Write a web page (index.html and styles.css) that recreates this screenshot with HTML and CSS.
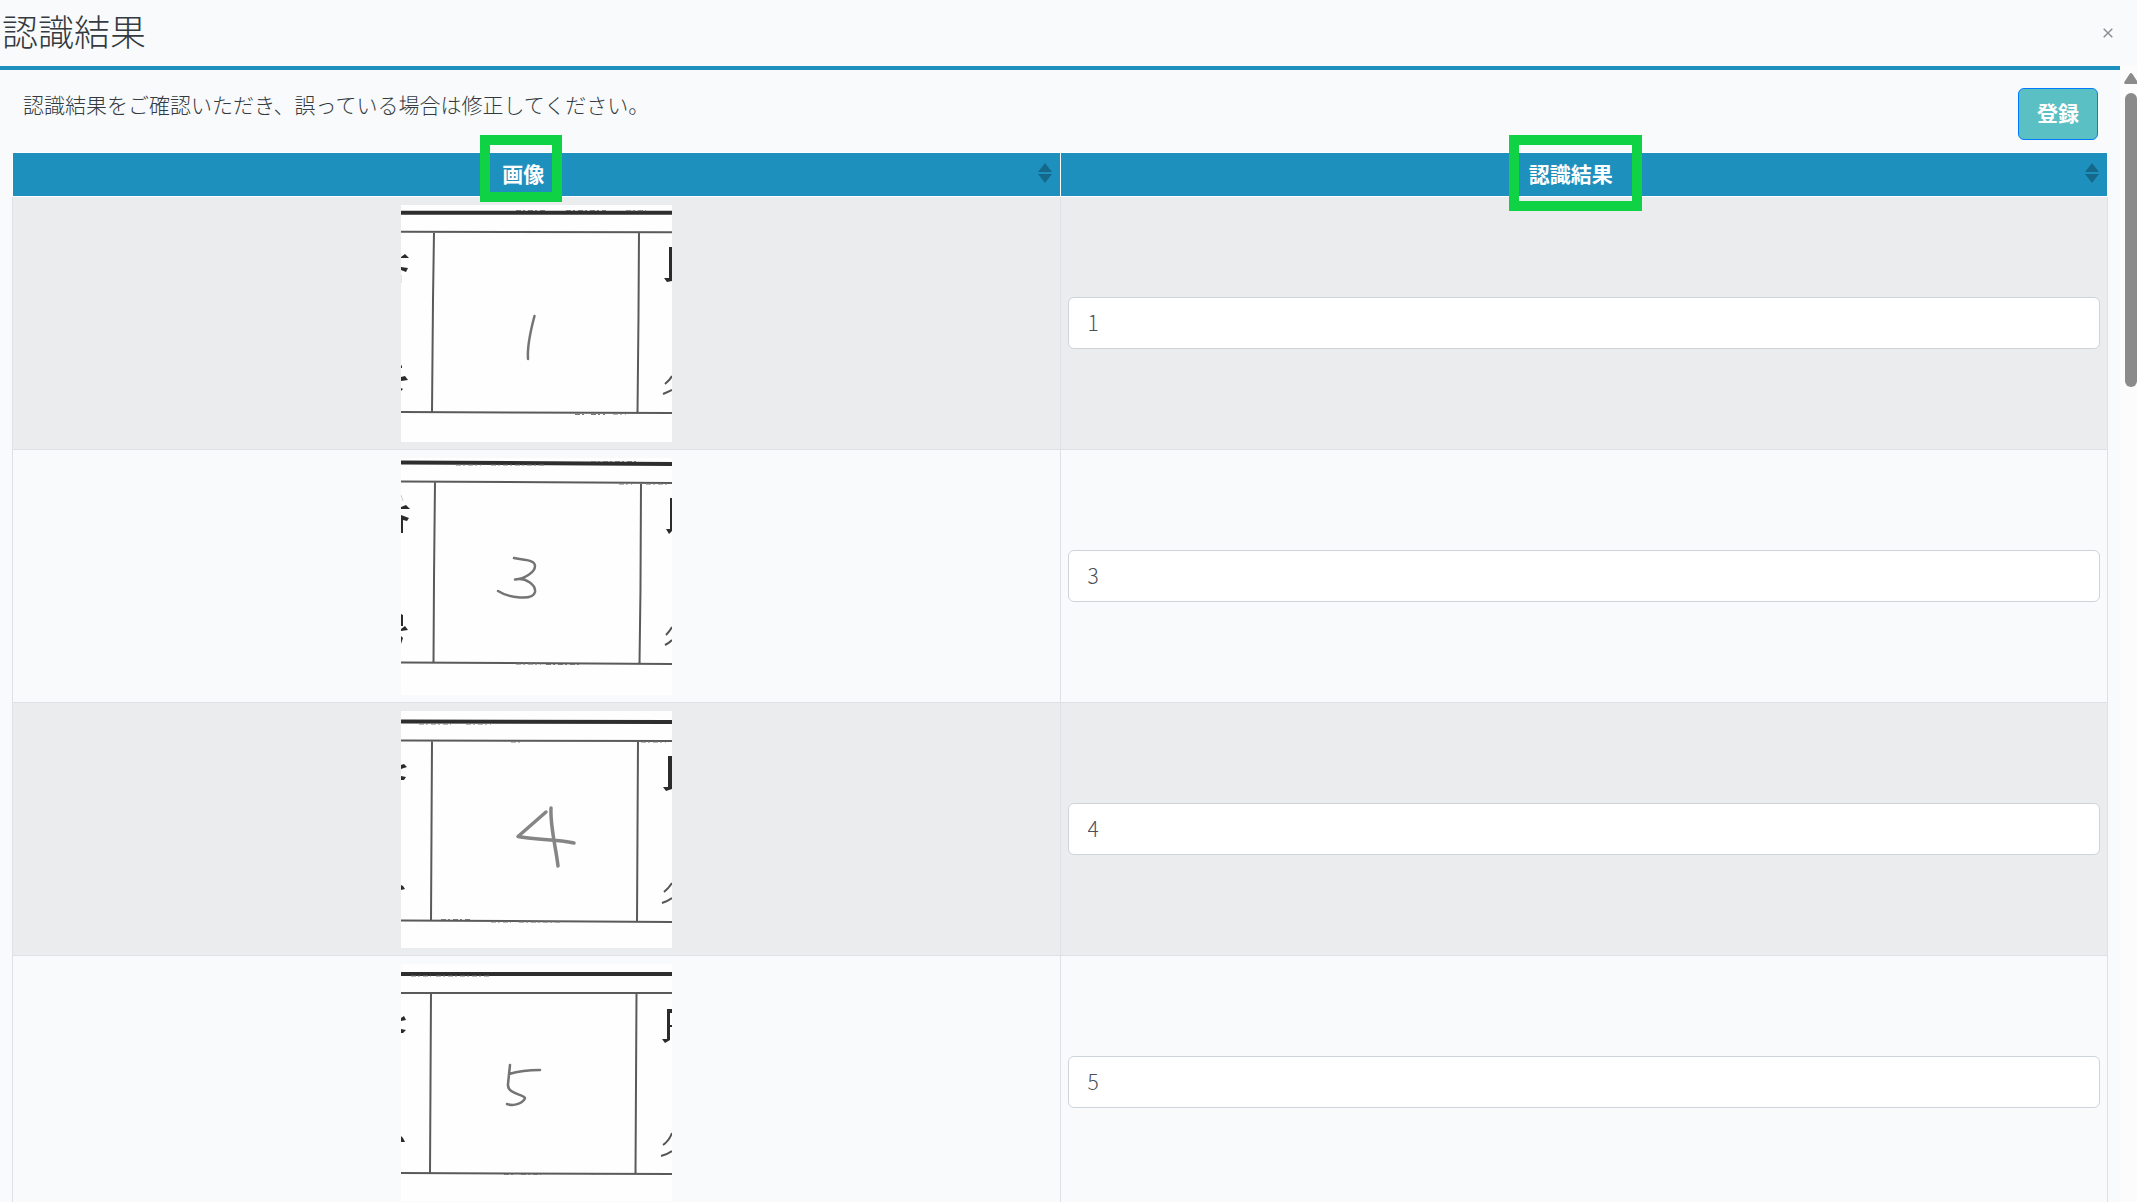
FILE: index.html
```html
<!DOCTYPE html>
<html lang="ja">
<head>
    <meta charset="UTF-8">
    <meta name="viewport" content="width=device-width, initial-scale=1.0">
    <title>認識結果</title>
    <link rel="stylesheet" href="styles.css">
</head>
<body>
    <header class="modal-header">
        <h1>認識結果</h1>
        <button type="button" class="close" aria-label="閉じる">
            <svg width="10" height="10" viewBox="0 0 10 10"><path d="M.7 .7L9.3 9.3M9.3 .7L.7 9.3"/></svg>
        </button>
    </header>

    <div class="modal-body">
        <main class="content">
            <div class="toolbar">
                <p>認識結果をご確認いただき、誤っている場合は修正してください。</p>
                <button type="button" class="btn-register">登録</button>
            </div>

            <table class="result-table">
                <thead>
                    <tr>
                        <th>
                            <div class="th-inner">
                                <span class="label">画像<span class="mark mark-image"></span></span>
                                <svg class="sort" width="14" height="20" viewBox="0 0 14 20"><path d="M7 0L14 9H0zM7 20L0 11H14z"/></svg>
                            </div>
                        </th>
                        <th>
                            <div class="th-inner">
                                <span class="label">認識結果<span class="mark mark-result"></span></span>
                                <svg class="sort" width="14" height="20" viewBox="0 0 14 20"><path d="M7 0L14 9H0zM7 20L0 11H14z"/></svg>
                            </div>
                        </th>
                    </tr>
                </thead>
                <tbody>
                    <tr>
                        <td>
                            <svg class="scan" width="271" height="237" viewBox="0 0 271 237">
                                <path class="thick" d="M0 7.7H271"/>
                                <path class="rough" d="M115 5.5H145M165 5.5H205M225 5.7H245"/>
                                <path class="rule" d="M0 26.7L271 27.3M0 207L271 208M33 27L32 95L31 207M238 27L237.500 110L236.500 208"/>
                                <path class="rough" d="M174 209.500H183M190 209.500H204M212 209H225"/>
                                <path class="print" d="M0 52L4 49L8 53H0zM0 62L7 63L5 67L0 65zM0 160L1 161V163H0zM0 172L4 171L7 175L0 176zM0 183L2 184L0 186zM268 42H271V76L266 77L263 73H268z"/>
                                <path class="faint" d="M0 70V78"/>
                                <path class="brush" d="M264 179Q269 175 271 171M262 189Q267 187 271 185"/>
                                <path class="pencil" d="M133.500 111C130 124 126 140 127 154"/>
                            </svg>
                        </td>
                        <td><input type="text" value="1" aria-label="認識結果 1"></td>
                    </tr>
                    <tr>
                        <td>
                            <svg class="scan" width="271" height="237" viewBox="0 0 271 237">
                                <path class="thick" d="M0 4.500L271 6"/>
                                <path class="rough" d="M55 7H80M90 7H145M190 3.500H235"/>
                                <path class="rule" d="M0 23.500L271 25M0 204.500L271 206M34 24L33 120L32.500 205M240 25L239.500 130L238.500 206"/>
                                <path class="rough" d="M218 26H231M245 26H268M115 206H140M145 206.500H180"/>
                                <path class="print" d="M0 49L5 47L9 51H0zM0 57L8 60L6 63L2 62V75H0zM0 156L2 157V168H0zM0 171L4 168L7 172L0 173zM0 178L2 180L0 186zM269 40H271V73L268 76L265 71H269z"/>
                                <path class="faint" d="M0 37L2 43"/>
                                <path class="brush" d="M265 177Q269 173 271 169M264 187Q268 185 271 182"/>
                                <path class="pencil" d="M113 100C120 102 134 101 134 108C134 114 124 121 114 121.500C125 119 135 127 134 134C132 143 108 140 97 133"/>
                            </svg>
                        </td>
                        <td><input type="text" value="3" aria-label="認識結果 2"></td>
                    </tr>
                    <tr>
                        <td>
                            <svg class="scan" width="271" height="237" viewBox="0 0 271 237">
                                <path class="thick" d="M0 10.500L271 11"/>
                                <path class="rough" d="M18 13H50M65 13H90"/>
                                <path class="rule" d="M0 29.500L271 30M0 209.500L271 211M31 30L30.500 120L30 210M237 30L236.500 120L236 211"/>
                                <path class="rough" d="M40 208.500H70M90 211H110M118 211H160M110 31H120M240 31H265"/>
                                <path class="print" d="M0 54L3 53L6 56L0 58zM0 65L5 66L3 69L0 69zM0 174L2 175L4 178L0 179zM267 45H271V78L265 80L262 76H267z"/>
                                <path class="brush" d="M263 181Q268 177 271 172M261 192Q267 190 271 187"/>
                                <path class="pencil bold" d="M145 101L117 125.500C133 129 155 128 173 132M150 97C149 115 155 137 157 155"/>
                            </svg>
                        </td>
                        <td><input type="text" value="4" aria-label="認識結果 3"></td>
                    </tr>
                    <tr>
                        <td>
                            <svg class="scan" width="271" height="237" viewBox="0 0 271 237">
                                <path class="thick" d="M0 10H271"/>
                                <path class="rough" d="M10 12H30M35 12H90"/>
                                <path class="rule" d="M0 29L271 29M0 209L271 210M30 29L29.500 120L29 209M235.500 29L235 120L234.500 209"/>
                                <path class="rough" d="M103 210.500H115M120 210.500H140M190 210.500H215"/>
                                <path class="print" d="M0 54L3 52L5 56L0 57zM0 65L5 66L2 69L0 69zM0 172L2 174L4 178L0 178zM266 45H271V49H269V61H271V63H269V76L264 79L261 75H266z"/>
                                <path class="brush" d="M262 181Q268 177 271 169M260 192Q267 190 271 187"/>
                                <path class="pencil" d="M109 101L107 120C106 130 122 130 124 134C123 138 114 143 106 140M108 110C118 107 128 106 139 106"/>
                            </svg>
                        </td>
                        <td><input type="text" value="5" aria-label="認識結果 4"></td>
                    </tr>
                </tbody>
            </table>
        </main>

        <div class="scrollbar" aria-hidden="true">
            <svg width="14" height="11" viewBox="0 0 14 11"><path d="M1 11Q-.5 10 .7 8.500L5.500 1Q7 -.8 8.500 1L13.300 8.500Q14.500 10 13 11z"/></svg>
            <div class="thumb"></div>
        </div>
    </div>
</body>
</html>
```
FILE: styles.css
```css
* {
    box-sizing: border-box;
}

body {
    display: flex;
    flex-direction: column;
    height: 100vh;
    margin: 0;
    overflow: hidden;
    background-color: #f8fafc;
    color: #343a40;
    font-family: "Noto Sans CJK JP", sans-serif;
    font-size: 21px;
    font-weight: 300;
    line-height: 32px;
}

button, input {
    font: inherit;
}

.modal-header {
    display: flex;
    flex: none;
    align-items: center;
    justify-content: space-between;
    height: 66px;
    padding: 0 16px 0 2px;
}

.modal-header h1 {
    margin: 0;
    padding-bottom: 6px;
    font-size: 36px;
    font-weight: 300;
    line-height: 48px;
}

.close {
    display: flex;
    padding: 8px;
    border: 0;
    background: none;
}

.close svg {
    fill: none;
    stroke: #8a8c8f;
    stroke-width: 1.4;
}

.modal-body {
    display: flex;
    flex: 1;
    min-height: 0;
}

.content {
    flex: 1;
    padding: 18px 12px 0;
    border-top: 4px solid #1e90be;
    overflow: hidden;
}

.toolbar {
    display: flex;
    align-items: flex-start;
    justify-content: space-between;
    margin-bottom: 12px;
    padding: 0 10px 0 11px;
}

.toolbar p {
    margin: 0;
    line-height: 32px;
}

.btn-register {
    height: 52px;
    padding: 0 18px 4px;
    border: 1px solid #007bff;
    border-radius: 6px;
    background-color: #5bc0c3;
    color: #fff;
    font-weight: 700;
}

/* Result table */
.result-table {
    width: 100%;
    border-collapse: collapse;
    table-layout: fixed;
}

th {
    height: 44px;
    padding: 0 8px 3px;
    border: 1px solid #fff;
    background-color: #1e90be;
    color: #fff;
    font-weight: 700;
}

.th-inner {
    display: flex;
    align-items: center;
}

.label {
    position: relative;
    margin: 0 auto;
}

.sort {
    margin-left: 12px;
    fill: #16688a;
}

td {
    padding: 8px 7px 7px;
    border: 1px solid #dee2e6;
}

tbody tr:nth-child(odd) {
    background-color: #ebecee;
}

td input {
    display: block;
    width: 100%;
    height: 52px;
    margin-bottom: 2px;
    padding: 0 19px 2px;
    border: 1px solid #ced4da;
    border-radius: 6px;
    background-color: #fff;
    color: #495057;
}

/* Green frames over the column names */
.mark {
    position: absolute;
    top: -22px;
    border: 10px solid #10d245;
}

.mark-image {
    right: -18px;
    bottom: -13px;
    left: -22px;
}

.mark-result {
    right: -29px;
    bottom: -22px;
    left: -20px;
}

/* Scanned cells */
.scan {
    display: block;
    margin: 0 auto;
    background-color: #fefefe;
    fill: none;
}

.thick {
    stroke: #2e2e2e;
    stroke-width: 4;
}

.rule {
    stroke: #5a5a5a;
    stroke-width: 2;
}

.rough {
    stroke: #777;
    stroke-width: 1;
    stroke-dasharray: 5 2 2 3;
}

.print {
    fill: #2b2b2b;
}

.faint {
    stroke: #ccc;
}

.brush {
    stroke: #555;
    stroke-width: 2;
}

.pencil {
    stroke: #747474;
    stroke-width: 2.5;
    stroke-linecap: round;
    stroke-linejoin: round;
}

.pencil.bold {
    stroke: #858585;
    stroke-width: 3.5;
}

/* Scrollbar */
.scrollbar {
    display: flex;
    flex: none;
    flex-direction: column;
    gap: 9px;
    width: 17px;
    padding: 7px 0 0 4px;
    background-color: #fcfcfc;
    fill: #8b8b8b;
}

.thumb {
    width: 12px;
    height: 26%;
    margin-left: 1px;
    border-radius: 6px;
    background-color: #8b8b8b;
}
```
